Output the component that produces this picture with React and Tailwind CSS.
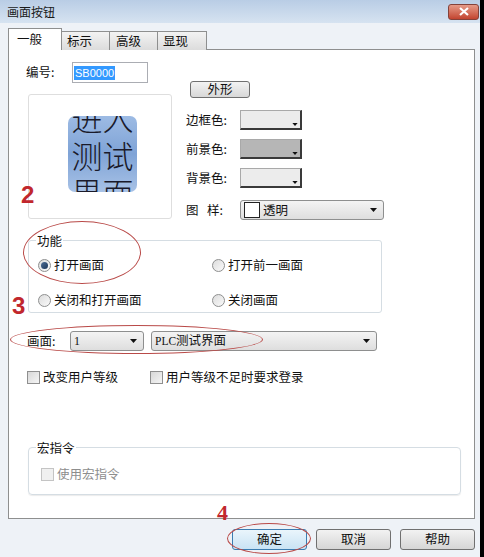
import React from "react";

const cjk = "font-['Noto_Sans_CJK_SC','Noto_Sans',sans-serif]";

function Arrow({ className = "" }) {
  return (
    <svg width="7" height="4" viewBox="0 0 7 4" className={className}>
      <path d="M0 0 H7 L3.5 4 Z" fill="#111" />
    </svg>
  );
}

function Radio({ checked, label }) {
  return (
    <div className="flex items-center h-[16px] gap-[3px]">
      <span className="w-[13px] h-[13px] rounded-full border border-[#8e8f8f] bg-gradient-to-br from-[#dcdcdc] to-[#fafafa] flex items-center justify-center">
        {checked && <span className="w-[7px] h-[7px] rounded-full bg-gradient-to-br from-[#4f6f97] to-[#1b3558]" />}
      </span>
      <span className="text-[12.5px] text-[#111]">{label}</span>
    </div>
  );
}

function Check({ label, disabled }) {
  return (
    <div className="flex items-center h-[16px] gap-[3px]">
      <span className={`w-[13px] h-[13px] border ${disabled ? "border-[#c4c4c4] bg-[#f0f0f0]" : "border-[#8f8f8f] bg-gradient-to-br from-[#d8d8d8] to-[#f5f5f5]"}`} />
      <span className={`text-[12.5px] ${disabled ? "text-[#8d8d8d]" : "text-[#111]"}`}>{label}</span>
    </div>
  );
}

function ColorBox({ fill }) {
  return (
    <div className={`relative w-[62px] h-[20px] border-t border-l border-[#a9a9a9] border-r-2 border-b-2 border-r-[#3a3a3a] border-b-[#3a3a3a] ${fill}`}>
      <Arrow className="absolute right-[2px] bottom-[2px] w-[6px] h-[3px]" />
    </div>
  );
}

function Combo({ width, children }) {
  return (
    <div className={`${width} h-[20px] rounded-[3px] border border-[#8e8f8f] bg-gradient-to-b from-[#f4f4f4] to-[#dedede] flex items-center pl-[3px] pr-[6px]`}>
      <div className="flex-1 flex items-center gap-[3px] overflow-hidden">{children}</div>
      <Arrow />
    </div>
  );
}

function Btn({ label, primary }) {
  return (
    <div className={`w-[75px] h-[21px] rounded-[3px] border flex items-center justify-center text-[12.5px] text-[#111] ${primary ? "border-[#3b7cb0] bg-gradient-to-b from-[#eaf5fc] to-[#c9e3f4]" : "border-[#707070] bg-gradient-to-b from-[#f2f2f2] to-[#d6d6d6]"}`}>
      {label}
    </div>
  );
}

export default function App() {
  return (
    <div className={`relative w-[484px] h-[557px] overflow-hidden bg-[#eef2f7] border-r-4 border-black ${cjk}`}>
      {/* title bar */}
      <div className="h-[23px] bg-gradient-to-b from-[#b9cde5] to-[#d6e3f1] flex items-center justify-between pl-[7px] pr-[1px]">
        <span className="text-[12px] text-[#1a1a1a]">画面按钮</span>
        <div className="w-[31px] h-[16px] rounded-[3px] border border-[#84423a] bg-gradient-to-b from-[#e59a88] to-[#c2432f] flex items-center justify-center">
          <svg width="10" height="9" viewBox="0 0 10 9">
            <path d="M1 1 L9 8 M9 1 L1 8" stroke="#fff" strokeWidth="2.2" />
          </svg>
        </div>
      </div>

      {/* tabs */}
      <div className="ml-[8px] mt-[5px] h-[22px] flex items-end relative z-10">
        <div className="w-[54px] h-[22px] bg-white border border-b-0 border-[#8e8f8f] flex items-start pt-[1px] pl-[8px] text-[12.5px] text-[#111]">一般</div>
        <div className="w-[48px] h-[19px] border border-l-0 border-b-0 border-[#8e8f8f] bg-gradient-to-b from-[#f3f3f3] to-[#dcdcdc] pl-[5px] text-[12.5px] leading-[18px] text-[#111]">标示</div>
        <div className="w-[48px] h-[19px] border border-l-0 border-b-0 border-[#8e8f8f] bg-gradient-to-b from-[#f3f3f3] to-[#dcdcdc] pl-[6px] text-[12.5px] leading-[18px] text-[#111]">高级</div>
        <div className="w-[49px] h-[19px] border border-l-0 border-b-0 border-[#8e8f8f] bg-gradient-to-b from-[#f3f3f3] to-[#dcdcdc] pl-[5px] text-[12.5px] leading-[18px] text-[#111]">显现</div>
      </div>

      {/* panel */}
      <div className="ml-[8px] -mt-px w-[467px] h-[470px] border border-[#8e8f8f] bg-white text-[12.5px] text-[#111]">
        {/* top section */}
        <div className="flex pt-[12px] pl-[17px] h-[170px]">
          <div className="w-[160px]">
            <div className="flex items-center h-[21px]">
              <span className="w-[46px]">编号:</span>
              <div className="w-[76px] h-[21px] border border-[#abadb3] flex items-center pl-[1px]">
                <span className="bg-[#3399ff] text-white text-[11px] font-['Liberation_Sans',sans-serif] px-[1px] leading-[14px]">SB0000</span>
              </div>
            </div>
            <div className="mt-[11px] ml-[2px] w-[144px] h-[125px] border border-[#dedede] rounded-[3px] flex pl-[39px] pt-[21px]">
              <div className="w-[69px] h-[76px] rounded-[7px] overflow-hidden bg-gradient-to-b from-[#9dbbe4] via-[#7fa3d6] to-[#a8c2e6] flex flex-col items-center justify-center text-[31px] leading-[37px] text-[#1a1a2a] font-light">
                <span className="h-[37px] shrink-0">进入</span>
                <span className="h-[37px] shrink-0">测试</span>
                <span className="h-[37px] shrink-0">界面</span>
              </div>
            </div>
          </div>
          <div className="pt-[19px]">
            <div className="ml-[4px] w-[60px] h-[17px] rounded-[3px] border border-[#707070] bg-gradient-to-b from-[#f3f3f3] to-[#d8d8d8] flex items-center justify-center">外形</div>
            <div className="mt-[12px] flex flex-col gap-[9px]">
              <div className="flex items-center h-[20px]">
                <span className="w-[54px]">边框色:</span>
                <ColorBox fill="bg-[#ececec]" />
              </div>
              <div className="flex items-center h-[20px]">
                <span className="w-[54px]">前景色:</span>
                <ColorBox fill="bg-[#b6b6b6]" />
              </div>
              <div className="flex items-center h-[20px]">
                <span className="w-[54px]">背景色:</span>
                <ColorBox fill="bg-[#ececec]" />
              </div>
            </div>
            <div className="mt-[12px] flex items-center h-[20px]">
              <span className="w-[54px]">图&nbsp;&nbsp;&nbsp;样:</span>
              <Combo width="w-[144px]">
                <span className="w-[16px] h-[16px] border border-[#222] bg-white" />
                <span>透明</span>
              </Combo>
            </div>
          </div>
        </div>

        {/* function group */}
        <fieldset className="mt-[12px] ml-[19px] w-[354px] border border-[#d5dde3] rounded-[3px] pb-[4px]">
          <legend className="ml-[7px] px-[1px] leading-[17px]">功能</legend>
          <div className="mt-[8px] pl-[9px] grid grid-cols-[174px_1fr] gap-y-[19px]">
            <Radio checked label="打开画面" />
            <Radio label="打开前一画面" />
            <Radio label="关闭和打开画面" />
            <Radio label="关闭画面" />
          </div>
        </fieldset>

        {/* screen row */}
        <div className="mt-[18px] ml-[18px] flex items-center h-[20px]">
          <span className="w-[43px]">画面:</span>
          <Combo width="w-[74px]">
            <span className="font-['Liberation_Serif',serif] text-[12px]">1</span>
          </Combo>
          <div className="w-[7px]" />
          <Combo width="w-[226px]">
            <span>
              <span className="font-['Liberation_Serif',serif] text-[11.5px]">PLC</span>测试界面
            </span>
          </Combo>
        </div>

        {/* checkboxes */}
        <div className="mt-[18px] ml-[18px] flex">
          <div className="w-[123px]">
            <Check label="改变用户等级" />
          </div>
          <Check label="用户等级不足时要求登录" />
        </div>

        {/* macro group */}
        <fieldset className="mt-[54px] ml-[19px] w-[433px] border border-[#d5dde3] rounded-[4px] pb-[12px] shadow-[0_1px_1px_rgba(0,0,0,0.08)]">
          <legend className="ml-[7px] px-[1px] leading-[17px]">宏指令</legend>
          <div className="mt-[10px] pl-[12px]">
            <Check disabled label="使用宏指令" />
          </div>
        </fieldset>
      </div>

      {/* buttons */}
      <div className="mt-[10px] ml-[232px] flex gap-[9px]">
        <Btn primary label="确定" />
        <Btn label="取消" />
        <Btn label="帮助" />
      </div>

      {/* red annotations */}
      <div className="absolute left-[23px] top-[221px] w-[118px] h-[63px] rounded-[50%] border-[1.5px] border-[#b94a48]" />
      <div className="absolute left-[10px] top-[325px] w-[253px] h-[29px] rounded-[50%] border-[1.5px] border-[#b94a48]" />
      <div className="absolute left-[227px] top-[523px] w-[84px] h-[31px] rounded-[50%] border-[1.5px] border-[#b94a48]" />
      <span className="absolute left-[21px] top-[183px] text-[24px] leading-[24px] font-bold text-[#c1272d] font-['Liberation_Sans',sans-serif]">2</span>
      <span className="absolute left-[12px] top-[294px] text-[24px] leading-[24px] font-bold text-[#c1272d] font-['Liberation_Sans',sans-serif]">3</span>
      <span className="absolute left-[217px] top-[502px] text-[22px] leading-[22px] font-bold text-[#c1272d] font-['Liberation_Serif',serif]">4</span>
    </div>
  );
}
